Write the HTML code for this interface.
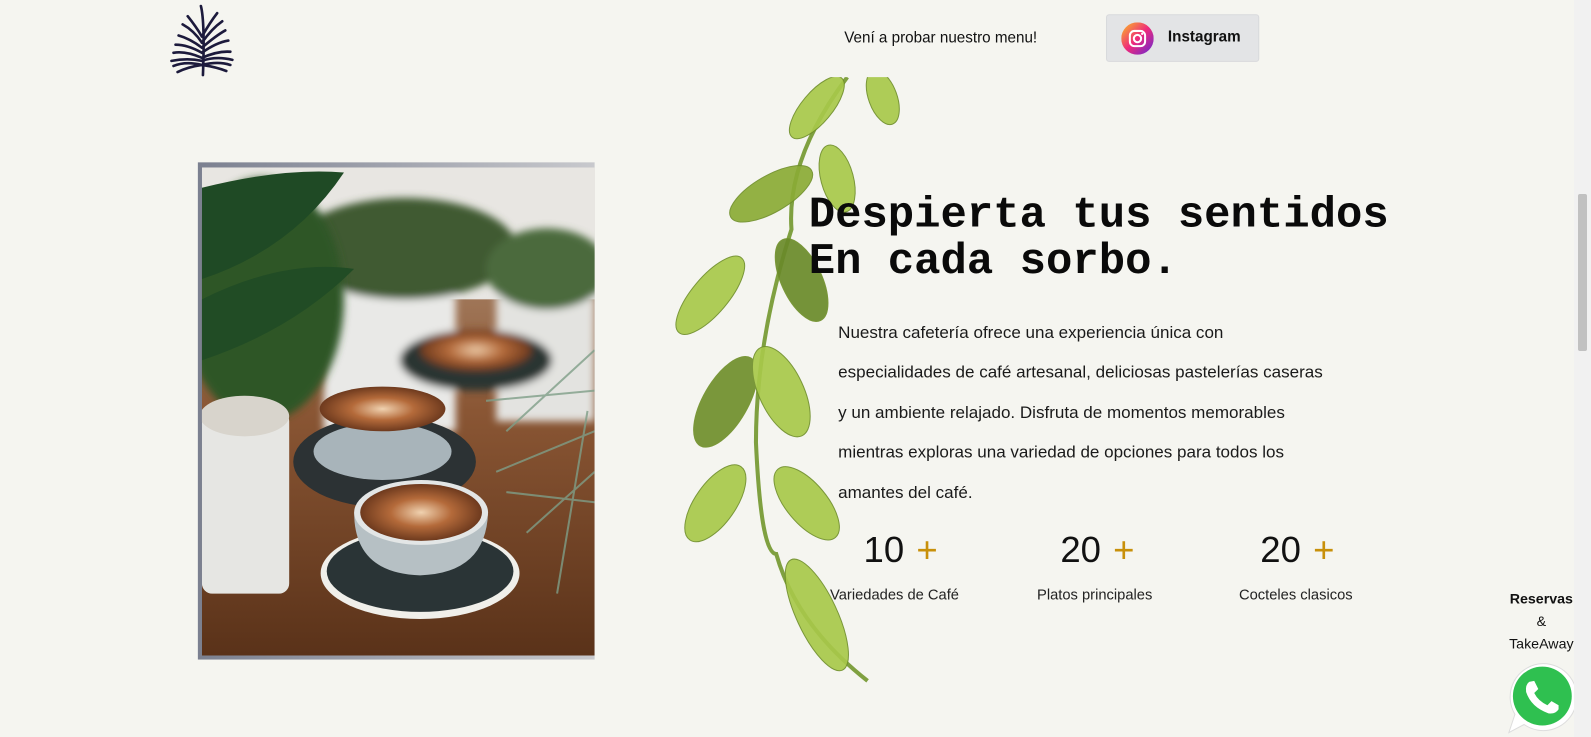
<!DOCTYPE html>
<html><head><meta charset="utf-8">
<style>
*{margin:0;padding:0;box-sizing:border-box}
html,body{width:1591px;height:737px;overflow:hidden;background:#f5f5f0;font-family:"Liberation Sans",sans-serif;position:relative}
.wrap{position:absolute;left:0;top:0;width:1568px;height:726px;transform:scale(1.0147);transform-origin:0 0}
.abs{position:absolute}
.nav{left:832px;top:29px;font-size:15px;color:#111}
.ig{left:1090px;top:14px;width:151px;height:47px;background:#e3e4e6;border:1px solid #d8d9dc;border-radius:3px}
.ig span{position:absolute;left:60px;top:13px;font-weight:bold;font-size:15px;color:#111}
h1{position:absolute;left:797px;top:190px;font-family:"Liberation Mono",monospace;font-size:43.3px;line-height:46px;font-weight:bold;color:#0a0a0a}
.p{left:826px;top:308px;white-space:nowrap;font-size:16.8px;line-height:39.4px;color:#1a1a1a}
.num{font-size:36px;color:#111;top:521px}
.num b{color:#c8900a;font-weight:normal;margin-left:12px}
.lab{font-size:14.5px;color:#222;top:579px}
.rs{left:1478px;top:579px;width:82px;text-align:center;font-size:14px;line-height:22px;color:#111}
.scroll{left:1574px;top:0;width:17px;height:737px;background:#f1f1f1}
.thumb{left:1578px;top:194px;width:9px;height:157px;background:#c1c1c1;border-radius:2px}
</style></head><body>
<div class="wrap">
<svg class="abs" style="left:163px;top:2px" width="70" height="76" viewBox="0 0 70 76">
<g stroke="#1c1a3c" stroke-width="2.6" fill="none" stroke-linecap="round">
<path d="M35 4 Q39 20 37 72"/>
<path d="M36 62 Q20 58 8 63"/><path d="M36 62 Q52 58 64 62"/>
<path d="M36 58 Q22 55 6 58"/><path d="M36 58 Q50 53 66 57"/>
<path d="M36 55 Q20 48 8 50"/><path d="M36 55 Q52 48 64 49"/>
<path d="M36 50 Q22 42 10 42"/><path d="M36 50 Q50 40 62 38"/>
<path d="M36 45 Q24 36 13 33"/><path d="M36 45 Q50 33 59 28"/>
<path d="M36 40 Q28 28 17 22"/><path d="M36 40 Q46 26 56 19"/>
<path d="M36 34 Q30 24 22 14"/><path d="M36 34 Q44 20 51 11"/>
<path d="M36 62 Q22 64 12 69"/><path d="M36 62 Q50 64 60 68"/>
</g></svg>
<div class="abs nav">Vení a probar nuestro menu!</div>
<div class="abs ig">
<svg class="abs" style="left:14px;top:7px" width="32" height="32" viewBox="0 0 32 32">
<defs><linearGradient id="g" x1="0" y1="0" x2="1" y2="1"><stop offset="0" stop-color="#fcc021"/><stop offset=".5" stop-color="#ee2a7b"/><stop offset="1" stop-color="#6228d7"/></linearGradient></defs>
<circle cx="16" cy="16" r="16" fill="url(#g)"/>
<rect x="8.5" y="8.5" width="15" height="15" rx="4.5" fill="none" stroke="#fff" stroke-width="2"/>
<circle cx="16" cy="16" r="3.6" fill="none" stroke="#fff" stroke-width="2"/>
<circle cx="20.6" cy="11.4" r="1.1" fill="#fff"/></svg>
<span>Instagram</span></div>

<div class="abs" style="left:195px;top:160px;width:391px;height:490px;background:linear-gradient(90deg,#7b8090,#c8c9cd);"></div>
<svg class="abs" style="left:199px;top:165px" width="387" height="481" viewBox="0 0 387 481">
<defs>
<linearGradient id="w" x1="0" y1="0" x2="0" y2="1"><stop offset="0" stop-color="#b89a80"/><stop offset=".5" stop-color="#8a5634"/><stop offset="1" stop-color="#5a3219"/></linearGradient>
<filter id="b"><feGaussianBlur stdDeviation="4"/></filter>
<radialGradient id="c"><stop offset="0" stop-color="#f0d2b0"/><stop offset=".5" stop-color="#b46a3a"/><stop offset="1" stop-color="#6e3a1e"/></radialGradient>
</defs>
<rect width="387" height="481" fill="url(#w)"/>
<rect width="387" height="130" fill="#e8e6e2"/>
<g filter="url(#b)">
<rect x="120" y="110" width="130" height="150" fill="#e9e9e7"/>
<rect x="290" y="120" width="97" height="130" fill="#e3e3e0"/>
<ellipse cx="200" cy="80" rx="110" ry="50" fill="#3f5a30"/>
<ellipse cx="340" cy="100" rx="60" ry="40" fill="#4c6a3c"/>
<ellipse cx="270" cy="190" rx="75" ry="30" fill="#2a3432"/>
<ellipse cx="270" cy="180" rx="55" ry="20" fill="url(#c)"/>
</g>
<ellipse cx="60" cy="130" rx="80" ry="120" fill="#2f5628" filter="url(#b)"/>
<path d="M0 20 Q80 0 140 5 Q90 80 0 110Z" fill="#1f4a25"/>
<path d="M0 130 Q80 90 150 100 Q90 160 0 190Z" fill="#214c25"/>
<ellipse cx="180" cy="290" rx="90" ry="45" fill="#2c3234"/>
<ellipse cx="178" cy="280" rx="68" ry="28" fill="#a8b4ba"/>
<ellipse cx="178" cy="238" rx="62" ry="22" fill="url(#c)"/>
<rect x="0" y="240" width="86" height="180" rx="10" fill="#e6e6e3"/>
<ellipse cx="42" cy="245" rx="44" ry="20" fill="#d8d4cc"/>
<ellipse cx="215" cy="400" rx="98" ry="45" fill="#f0efea"/>
<ellipse cx="215" cy="398" rx="92" ry="40" fill="#2a3436"/>
<path d="M150 340 Q150 400 215 402 Q280 400 282 340Z" fill="#b6c0c4"/>
<ellipse cx="216" cy="340" rx="66" ry="32" fill="#e3e6e6"/>
<ellipse cx="216" cy="340" rx="60" ry="28" fill="url(#c)"/>
<g stroke="#7f9e88" stroke-width="2" opacity=".8">
<path d="M387 180 L300 260 M387 220 L280 230 M387 260 L290 300 M387 300 L320 360 M380 240 L350 420 M387 330 L300 320"/></g>
</svg>

<svg class="abs" style="left:655px;top:76px" width="240" height="600" viewBox="0 0 240 600">
<path d="M180 0 Q120 80 125 150 Q90 260 90 360 Q95 470 110 470 Q130 540 200 595" stroke="#7fa040" stroke-width="4" fill="none"/>
<g fill="#a8c84a" stroke="#6f8f2a" stroke-width="1" opacity=".92">
<ellipse cx="150" cy="30" rx="15" ry="38" transform="rotate(40 150 30)"/>
<ellipse cx="215" cy="20" rx="14" ry="28" transform="rotate(-20 215 20)"/>
<ellipse cx="105" cy="115" rx="18" ry="46" transform="rotate(60 105 115)" fill="#8aab36"/>
<ellipse cx="170" cy="100" rx="16" ry="34" transform="rotate(-15 170 100)"/>
<ellipse cx="45" cy="215" rx="18" ry="48" transform="rotate(40 45 215)"/>
<ellipse cx="135" cy="200" rx="20" ry="44" transform="rotate(-25 135 200)" fill="#6a8a2a"/>
<ellipse cx="60" cy="320" rx="22" ry="50" transform="rotate(30 60 320)" fill="#6f8f2c"/>
<ellipse cx="115" cy="310" rx="22" ry="48" transform="rotate(-25 115 310)"/>
<ellipse cx="50" cy="420" rx="20" ry="44" transform="rotate(35 50 420)"/>
<ellipse cx="140" cy="420" rx="20" ry="44" transform="rotate(-40 140 420)"/>
<ellipse cx="150" cy="530" rx="20" ry="60" transform="rotate(-25 150 530)"/>
</g></svg>

<h1>Despierta tus sentidos<br>En cada sorbo.</h1>
<div class="abs p">Nuestra cafetería ofrece una experiencia única con<br>especialidades de café artesanal, deliciosas pastelerías caseras<br>y un ambiente relajado. Disfruta de momentos memorables<br>mientras exploras una variedad de opciones para todos los<br>amantes del café.</div>

<div class="abs num" style="left:851px">10<b>+</b></div>
<div class="abs num" style="left:1045px">20<b>+</b></div>
<div class="abs num" style="left:1242px">20<b>+</b></div>
<div class="abs lab" style="left:818px">Variedades de Café</div>
<div class="abs lab" style="left:1022px">Platos principales</div>
<div class="abs lab" style="left:1221px">Cocteles clasicos</div>

<div class="abs rs"><span style="font-weight:bold">Reservas</span><br>&amp;<br>TakeAway</div>
<svg class="abs" style="left:1484px;top:652px" width="72" height="72" viewBox="0 0 72 72">
<path d="M36 2 A33 33 0 1 1 18 62 L3 70 L9 52 A33 33 0 0 1 36 2Z" fill="#fff" stroke="#ddd"/>
<circle cx="36" cy="34" r="29" fill="#2fc050"/>
<path d="M23 20 Q19 23 20 30 Q25 45 42 51 Q49 52 52 47 L52 43 L45 39 L41 43 Q32 39 28 31 L32 27 L28 19Z" fill="#fff"/>
</svg>
</div>
<div class="abs scroll"></div>
<div class="abs thumb"></div>
</body></html>
